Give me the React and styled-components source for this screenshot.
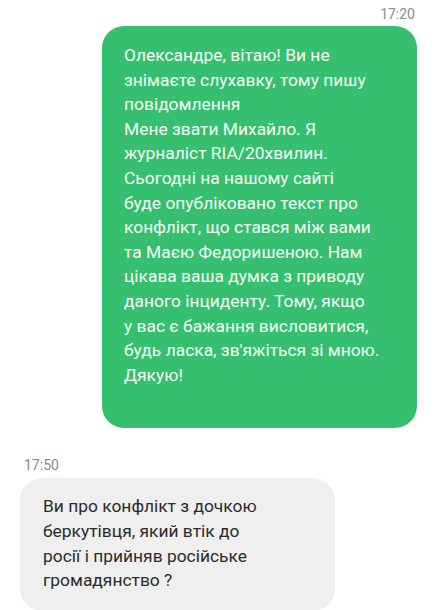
import React from "react";
import styled, { createGlobalStyle } from "styled-components";

const GlobalStyle = createGlobalStyle`
  html, body {
    margin: 0;
    padding: 0;
    background: #ffffff;
  }
  body {
    font-family: Roboto, "Noto Sans", sans-serif;
  }
`;

const Screen = styled.div`
  width: 444px;
  height: 610px;
  overflow: hidden;
  box-sizing: border-box;
  border-right: 9px solid #ffffff;
  position: relative;
  display: flex;
  flex-direction: column;
  padding: 6px 0 0;

  &::after {
    content: "";
    position: absolute;
    top: 0;
    bottom: 0;
    right: -1px;
    width: 1px;
    background: #f1f1f1;
  }
`;

const Group = styled.div`
  display: flex;
  flex-direction: column;
  align-items: ${(p) => (p.$out ? "flex-end" : "flex-start")};
  padding: ${(p) => (p.$out ? "0 18px 0 0" : "0 0 0 20px")};
  margin-top: ${(p) => p.$top || 0}px;
`;

const Time = styled.div`
  font-size: 14px;
  color: #8a8a8a;
  line-height: 16px;
  margin: ${(p) => (p.$out ? "0 2px 4px 0" : "0 0 5px 4px")};
`;

const Bubble = styled.div`
  box-sizing: border-box;
  width: 315px;
  border-radius: 22px;
  font-size: 17.4px;
  line-height: 24.6px;
  white-space: pre-line;
  background: ${(p) => (p.$out ? "#35bf6e" : "#efefef")};
  color: ${(p) => (p.$out ? "#f4fff7" : "#2b2b2b")};
  padding: ${(p) => (p.$out ? "17px 18px 41px 22px" : "16px 18px 18px 23px")};
`;

const outText = `Олександре, вітаю! Ви не
знімаєте слухавку, тому пишу
повідомлення
Мене звати Михайло. Я
журналіст RIA/20хвилин.
Сьогодні на нашому сайті
буде опубліковано текст про
конфлікт, що стався між вами
та Маєю Федоришеною. Нам
цікава ваша думка з приводу
даного інциденту. Тому, якщо
у вас є бажання висловитися,
будь ласка, зв'яжіться зі мною.
Дякую!`;

const inText = `Ви про конфлікт з дочкою
беркутівця, який втік до
росії і прийняв російське
громадянство ?`;

export default function App() {
  return (
    <>
      <GlobalStyle />
      <Screen>
        <Group $out>
          <Time $out>17:20</Time>
          <Bubble $out>{outText}</Bubble>
        </Group>
        <Group $top={29}>
          <Time>17:50</Time>
          <Bubble>{inText}</Bubble>
        </Group>
      </Screen>
    </>
  );
}
